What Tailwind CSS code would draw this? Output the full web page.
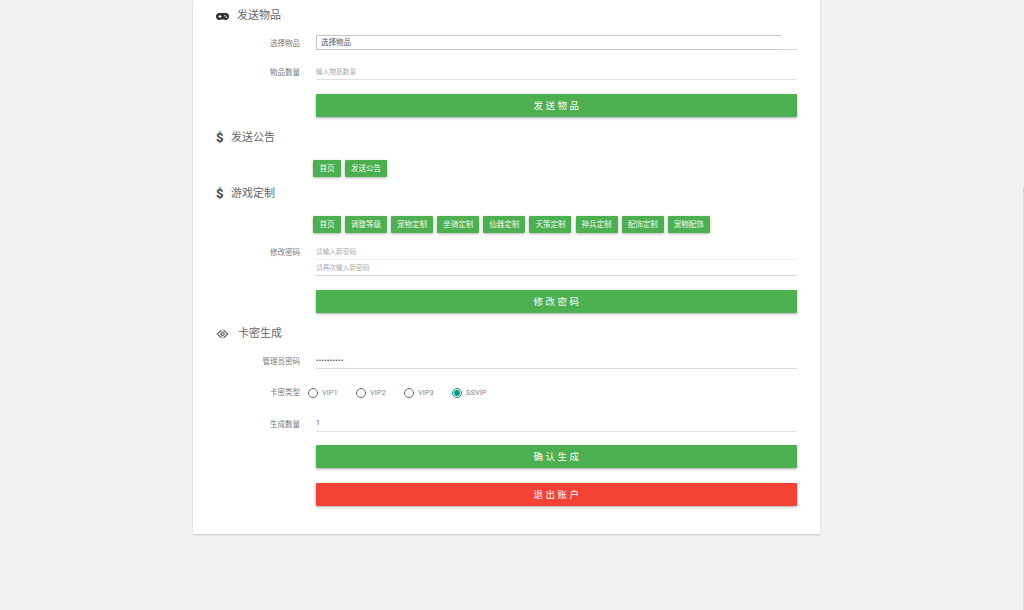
<!DOCTYPE html>
<html lang="zh-CN">
<head>
    <meta charset="UTF-8">
    <title>GM</title>
    <script src="https://cdn.jsdelivr.net/npm/@tailwindcss/browser@4"></script>
</head>
<body class="bg-[#f2f2f2] h-[610px] overflow-hidden font-['Roboto','Noto_Sans_CJK_SC',sans-serif]">
    <div class="fixed right-0 top-[187px] bottom-0 w-px bg-[#dcdcdc]"></div>

    <div class="ml-[193px] w-[627px] h-[534px] bg-white shadow-[0_1px_2px_rgba(0,0,0,0.18)] pl-[23px] pr-[23px]">

        <!-- 发送物品 -->
        <div class="h-[30px] pt-[2px] flex items-center text-[#666] text-[11px]">
            <svg class="w-[13px] h-[7px] mr-[8px]" viewBox="0 0 26 14">
                <path d="M7 0h12a7 7 0 1 1-3.5 13h-5A7 7 0 1 1 7 0z" fill="#333"/>
                <path d="M5 6h2V4h2v2h2v2H9v2H7V8H5z" fill="#fff"/>
                <circle cx="18" cy="5.5" r="1.5" fill="#fff"/>
                <circle cx="21" cy="8.5" r="1.5" fill="#fff"/>
            </svg>
            <span>发送物品</span>
        </div>
        <div class="flex items-center h-[15px] mt-[5px]">
            <label class="w-[84px] pt-[2px] text-right text-[7.5px] text-[#777]">选择物品</label>
            <div class="ml-[16px] w-[481px] flex h-[15px] border-b border-[#d4d4d4]">
                <div class="w-[465px] h-[15px] pt-[1px] border border-r-0 border-[#c8c8c8] rounded-l-[2px] pl-[4px] flex items-center text-[7.5px] text-[#555]">选择物品</div>
            </div>
        </div>
        <div class="flex items-center h-[16px] mt-[14px]">
            <label class="w-[84px] pt-[2px] text-right text-[7.5px] text-[#777]">物品数量</label>
            <div class="ml-[16px] w-[481px] h-[16px] pt-[2px] border-b border-[#e2e2e2] flex items-center text-[6.7px] text-[#aaa]">输入物品数量</div>
        </div>
        <button class="block ml-[100px] mt-[14px] w-[481px] h-[23px] pt-[2px] pl-[2px] bg-[#4caf50] text-white text-[9.5px] tracking-[2.5px] rounded-[1px] shadow-[0_1px_3px_rgba(0,0,0,0.35)]">发送物品</button>

        <!-- 发送公告 -->
        <div class="h-[16px] mt-[12px] pt-[2px] flex items-center text-[#666] text-[11px]">
            <span class="w-[15px] mb-[2px] text-[13px] font-bold text-[#444] leading-none">$</span>
            <span>发送公告</span>
        </div>
        <div class="flex gap-[4.14px] ml-[97px] mt-[15px]">
            <button class="h-[17px] px-[6.4px] bg-[#4caf50] text-white/90 text-[7.5px] rounded-[1px] shadow-[0_1px_3px_rgba(0,0,0,0.3)]">首页</button>
            <button class="h-[17px] px-[6px] bg-[#4caf50] text-white/90 text-[7.5px] rounded-[1px] shadow-[0_1px_3px_rgba(0,0,0,0.3)]">发送公告</button>
        </div>

        <!-- 游戏定制 -->
        <div class="h-[16px] mt-[8px] pt-[2px] flex items-center text-[#666] text-[11px]">
            <span class="w-[15px] mb-[2px] text-[13px] font-bold text-[#444] leading-none">$</span>
            <span>游戏定制</span>
        </div>
        <div class="flex gap-[4.14px] ml-[97px] mt-[15px]">
            <button class="h-[17px] px-[6.4px] bg-[#4caf50] text-white/90 text-[7.5px] rounded-[1px] shadow-[0_1px_3px_rgba(0,0,0,0.3)]">首页</button>
            <button class="h-[17px] px-[6px] bg-[#4caf50] text-white/90 text-[7.5px] rounded-[1px] shadow-[0_1px_3px_rgba(0,0,0,0.3)]">调整等级</button>
            <button class="h-[17px] px-[6px] bg-[#4caf50] text-white/90 text-[7.5px] rounded-[1px] shadow-[0_1px_3px_rgba(0,0,0,0.3)]">宠物定制</button>
            <button class="h-[17px] px-[6px] bg-[#4caf50] text-white/90 text-[7.5px] rounded-[1px] shadow-[0_1px_3px_rgba(0,0,0,0.3)]">坐骑定制</button>
            <button class="h-[17px] px-[6px] bg-[#4caf50] text-white/90 text-[7.5px] rounded-[1px] shadow-[0_1px_3px_rgba(0,0,0,0.3)]">仙器定制</button>
            <button class="h-[17px] px-[6px] bg-[#4caf50] text-white/90 text-[7.5px] rounded-[1px] shadow-[0_1px_3px_rgba(0,0,0,0.3)]">天策定制</button>
            <button class="h-[17px] px-[6px] bg-[#4caf50] text-white/90 text-[7.5px] rounded-[1px] shadow-[0_1px_3px_rgba(0,0,0,0.3)]">神兵定制</button>
            <button class="h-[17px] px-[6px] bg-[#4caf50] text-white/90 text-[7.5px] rounded-[1px] shadow-[0_1px_3px_rgba(0,0,0,0.3)]">配饰定制</button>
            <button class="h-[17px] px-[6px] bg-[#4caf50] text-white/90 text-[7.5px] rounded-[1px] shadow-[0_1px_3px_rgba(0,0,0,0.3)]">宠物配饰</button>
        </div>
        <div class="flex items-center h-[16px] mt-[11px]">
            <label class="w-[84px] pt-[2px] text-right text-[7.5px] text-[#777]">修改密码</label>
            <div class="ml-[16px] w-[481px] h-[16px] pt-[2px] border-b border-[#ececec] flex items-center text-[6.7px] text-[#aaa]">请输入新密码</div>
        </div>
        <div class="flex items-center h-[16px]">
            <div class="ml-[100px] w-[481px] h-[16px] pt-[2px] border-b border-[#dcdcdc] flex items-center text-[6.7px] text-[#aaa]">请再次输入新密码</div>
        </div>
        <button class="block ml-[100px] mt-[14px] w-[481px] h-[23px] pt-[2px] pl-[2px] bg-[#4caf50] text-white text-[9.5px] tracking-[2.5px] rounded-[1px] shadow-[0_1px_3px_rgba(0,0,0,0.35)]">修改密码</button>

        <!-- 卡密生成 -->
        <div class="h-[16px] mt-[12px] pt-[2px] flex items-center text-[#666] text-[11px]">
            <svg class="w-[13px] h-[10px] mr-[9px]" viewBox="0 0 26 20" fill="none" stroke="#666" stroke-width="2.2">
                <path d="M11 2 2.5 10l8.5 8"/>
                <path d="M15 2l8.5 8-8.5 8"/>
                <path d="M13 6 9 10l4 4 4-4z"/>
            </svg>
            <span>卡密生成</span>
        </div>
        <div class="flex items-center h-[16px] mt-[12px]">
            <label class="w-[84px] pt-[2px] text-right text-[7.5px] text-[#777]">管理员密码</label>
            <div class="ml-[16px] w-[481px] h-[16px] pt-[2px] border-b border-[#dcdcdc] flex items-center text-[7px] tracking-[0.4px] text-[#444]">••••••••••</div>
        </div>
        <div class="flex items-center h-[14px] mt-[17px]">
            <label class="w-[84px] text-right text-[7.5px] text-[#777]">卡密类型</label>
            <div class="ml-[8px] flex items-center text-[7.5px] text-[#888]">
                <span class="w-[48px] flex items-center gap-[4px]"><span class="w-[10px] h-[10px] rounded-full border border-[#666]"></span>VIP1</span>
                <span class="w-[48px] flex items-center gap-[4px]"><span class="w-[10px] h-[10px] rounded-full border border-[#666]"></span>VIP2</span>
                <span class="w-[48px] flex items-center gap-[4px]"><span class="w-[10px] h-[10px] rounded-full border border-[#666]"></span>VIP3</span>
                <span class="flex items-center gap-[4px]"><span class="w-[10px] h-[10px] rounded-full border border-[#009688] flex items-center justify-center"><span class="w-[6px] h-[6px] rounded-full bg-[#009688]"></span></span>SSVIP</span>
            </div>
        </div>
        <div class="flex items-center h-[16px] mt-[16px]">
            <label class="w-[84px] pt-[2px] text-right text-[7.5px] text-[#777]">生成数量</label>
            <div class="ml-[16px] w-[481px] h-[16px] border-b border-[#e2e2e2] flex items-center text-[7px] text-[#555]">1</div>
        </div>
        <button class="block ml-[100px] mt-[13px] w-[481px] h-[23px] pt-[2px] pl-[2px] bg-[#4caf50] text-white text-[9.5px] tracking-[2.5px] rounded-[1px] shadow-[0_1px_3px_rgba(0,0,0,0.35)]">确认生成</button>
        <button class="block ml-[100px] mt-[15px] w-[481px] h-[23px] pt-[2px] pl-[2px] bg-[#f44336] text-white text-[9.5px] tracking-[2.5px] rounded-[1px] shadow-[0_1px_3px_rgba(0,0,0,0.35)]">退出账户</button>
    </div>
</body>
</html>
